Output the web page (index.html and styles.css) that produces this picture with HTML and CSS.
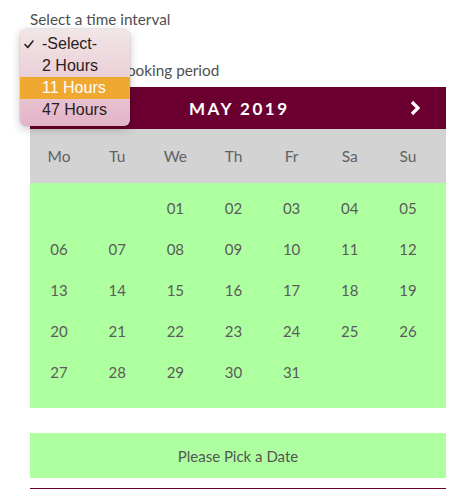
FILE: index.html
```html
<!DOCTYPE html>
<html>
<head>
<meta charset="utf-8">
<link rel="stylesheet" href="styles.css">
</head>
<body>
<div class="page">
  <div class="label">Select a time interval</div>
  <div class="select-wrap">
    <div class="select"></div>
    <div class="popup">
      <div class="opt checked">
        <svg class="check" width="10" height="9" viewBox="0 0 10 9"><polyline points="1,4.5 3.8,7.5 9,1" fill="none" stroke="#2a1c20" stroke-width="1.6" stroke-linecap="round" stroke-linejoin="round"/></svg>
        -Select-
      </div>
      <div class="opt">2 Hours</div>
      <div class="opt active">11 Hours</div>
      <div class="opt">47 Hours</div>
    </div>
  </div>
  <div class="label label-2">Choose your booking period</div>

  <div class="calendar">
    <div class="cal-head">
      <span class="title">MAY 2019</span>
      <svg class="next" width="12" height="16" viewBox="0 0 12 16"><polyline points="3,2 9,8 3,14" fill="none" stroke="#fff" stroke-width="3.2" stroke-linejoin="miter"/></svg>
    </div>
    <div class="weekdays">
      <span>Mo</span><span>Tu</span><span>We</span><span>Th</span><span>Fr</span><span>Sa</span><span>Su</span>
    </div>
    <div class="days">
      <span></span><span></span><span>01</span><span>02</span><span>03</span><span>04</span><span>05</span>
      <span>06</span><span>07</span><span>08</span><span>09</span><span>10</span><span>11</span><span>12</span>
      <span>13</span><span>14</span><span>15</span><span>16</span><span>17</span><span>18</span><span>19</span>
      <span>20</span><span>21</span><span>22</span><span>23</span><span>24</span><span>25</span><span>26</span>
      <span>27</span><span>28</span><span>29</span><span>30</span><span>31</span><span></span><span></span>
    </div>
  </div>

  <div class="result">Please Pick a Date</div>
  <div class="rule"></div>
</div>
</body>
</html>
```

FILE: styles.css
```css
html, body {
  margin: 0;
  padding: 0;
  background: #fff;
}
body {
  font-family: Lato, "Open Sans", sans-serif;
  color: #555;
}
.page {
  padding: 8px 30px 0 30px;
  width: 416px;
}
.label {
  font-size: 15.3px;
  line-height: 22px;
  height: 22px;
  color: #4f4f4f;
}
.label-2 {
  margin-top: 4px;
}
.select-wrap {
  position: relative;
  margin-top: 3px;
  height: 22px;
}
.select {
  width: 90px;
  height: 22px;
}
.popup {
  position: absolute;
  left: -10px;
  top: -4px;
  width: 110px;
  padding: 4px 0 5px 0;
  border-radius: 6px;
  background: linear-gradient(180deg, #f1e6e6 0%, #ecd2d9 45%, #e3b3c8 100%);
  box-shadow: 0 0 0 0.5px rgba(0,0,0,0.12), 0 3px 10px rgba(0,0,0,0.22);
  font-family: "Liberation Sans", Arial, sans-serif;
  font-size: 16px;
  color: #2a1c20;
  z-index: 5;
}
.opt {
  position: relative;
  height: 22px;
  line-height: 22px;
  padding-left: 22px;
}
.opt.active {
  background: #efa830;
  color: #fff;
}
.check {
  position: absolute;
  left: 4px;
  top: 7px;
}
.calendar {
  margin-top: 6px;
}
.cal-head {
  position: relative;
  height: 42px;
  background: #6b0030;
  display: flex;
  align-items: center;
  justify-content: center;
}
.title {
  color: #fff;
  font-weight: 700;
  font-size: 17px;
  letter-spacing: 2.5px;
  padding-left: 2.5px;
}
.next {
  position: absolute;
  right: 25px;
  top: 13px;
}
.weekdays {
  height: 54px;
  background: #d3d3d3;
  display: grid;
  grid-template-columns: repeat(7, 1fr);
  padding-right: 9px;
  align-items: center;
  font-size: 15.5px;
  color: #626262;
}
.weekdays span, .days span {
  text-align: center;
}
.days {
  background: #adff9f;
  display: grid;
  grid-template-columns: repeat(7, 1fr);
  grid-auto-rows: 41px;
  align-items: center;
  padding: 4px 9px 16px 0;
  font-size: 15px;
  color: #5c5a5c;
}
.result {
  margin-top: 25px;
  height: 45px;
  background: #adff9f;
  display: flex;
  align-items: center;
  justify-content: center;
  font-size: 15px;
  color: #555;
}
.rule {
  margin-top: 10px;
  height: 2px;
  background: #6b0030;
}
```
